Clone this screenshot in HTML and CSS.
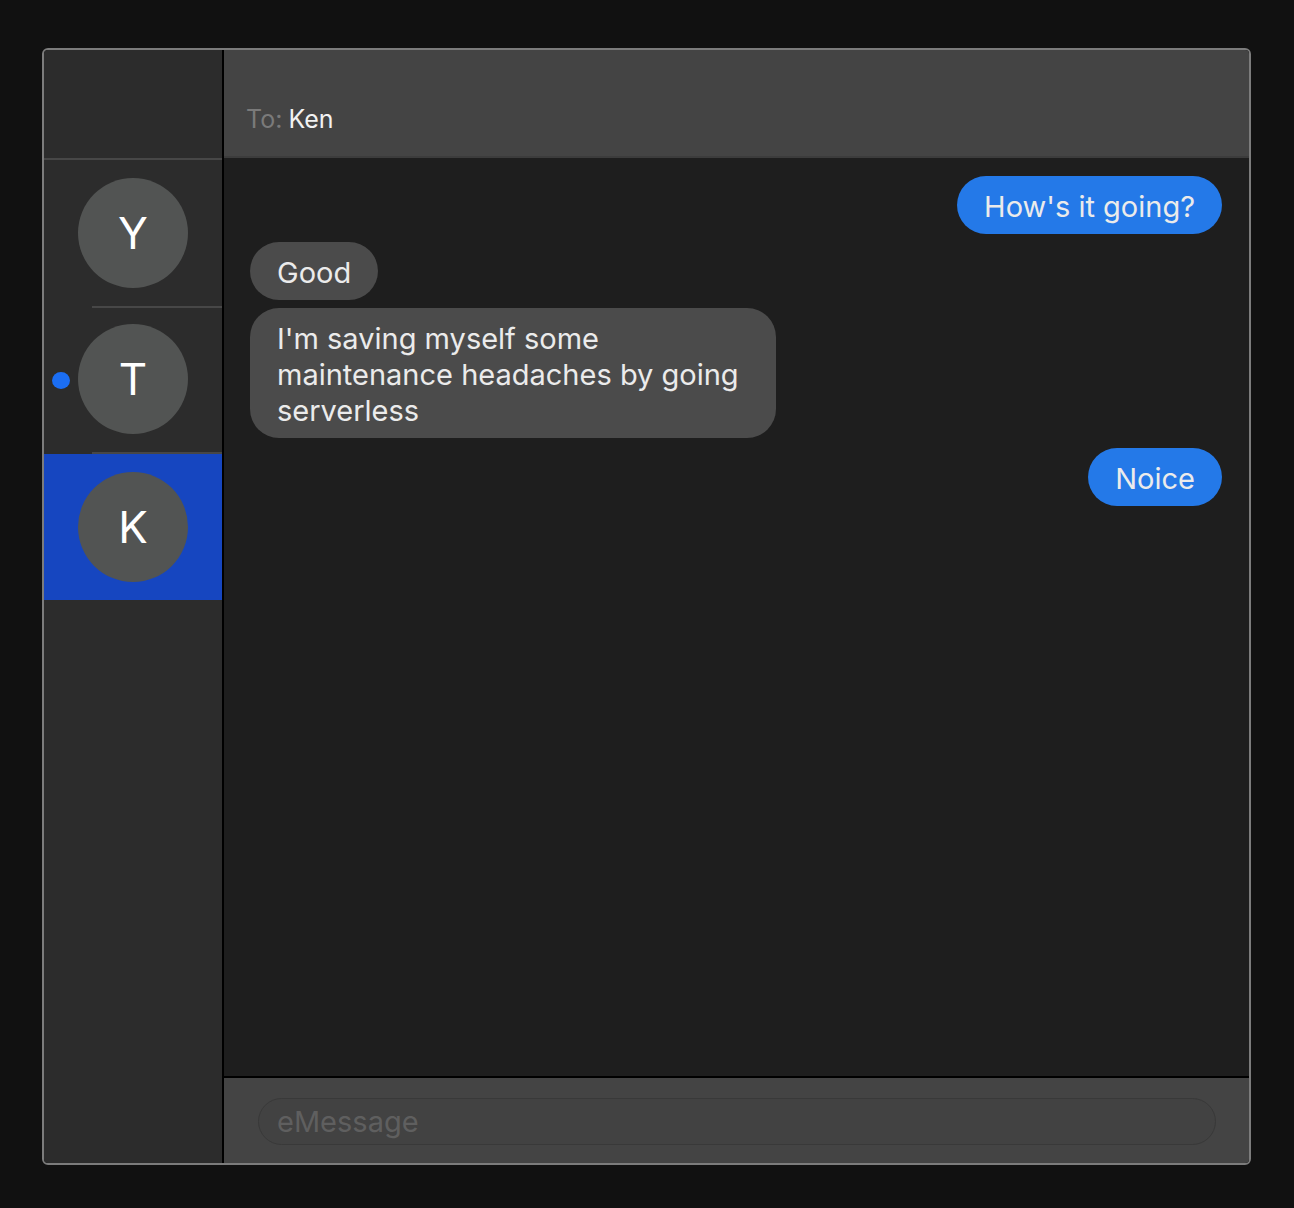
FILE: index.html
```html
<!DOCTYPE html>
<html>
<head>
<meta charset="utf-8">
<link rel="stylesheet" href="styles.css">
</head>
<body>
<div class="window">
  <aside class="sidebar">
    <div class="sidebar-header"></div>
    <div class="conv">
      <div class="avatar">Y</div>
    </div>
    <div class="conv sep">
      <span class="unread"></span>
      <div class="avatar">T</div>
    </div>
    <div class="conv sep selected">
      <div class="avatar">K</div>
    </div>
  </aside>
  <main class="main">
    <header class="main-header"><span class="to">To:</span> <span class="name">Ken</span></header>
    <section class="messages">
      <div class="bubble out">How's it going?</div>
      <div class="bubble in">Good</div>
      <div class="bubble in multi">I'm saving myself some maintenance headaches by going serverless</div>
      <div class="bubble out gap">Noice</div>
    </section>
    <footer class="composer">
      <div class="input">eMessage</div>
    </footer>
  </main>
</div>
</body>
</html>
```
FILE: styles.css
```css
* { box-sizing: border-box; }
html, body { margin: 0; padding: 0; }
body {
  background: #111111;
  font-family: Inter, "Liberation Sans", Arial, sans-serif;
  padding: 48px 43px 0 42px;
  height: 1208px;
}
.window {
  width: 1209px;
  height: 1117px;
  border: 2px solid #7c7c7c;
  border-radius: 6px;
  overflow: hidden;
  display: flex;
}
.sidebar {
  width: 180px;
  flex: none;
  background: #2c2c2c;
  border-right: 2px solid #000;
}
.sidebar-header {
  height: 110px;
  border-bottom: 2px solid #474747;
}
.conv {
  position: relative;
  height: 146px;
  display: flex;
  align-items: center;
  justify-content: center;
}
.conv.sep::before {
  content: "";
  position: absolute;
  left: 48px;
  right: 0;
  top: 0;
  height: 2px;
  background: #474747;
}
.conv.selected {
  height: 148px;
  border-top: 2px solid transparent;
  background: #1646c0;
  background-clip: padding-box;
}
.conv.selected::before { top: -2px; }
.avatar {
  width: 110px;
  height: 110px;
  border-radius: 50%;
  background: #525453;
  color: #fff;
  font-size: 44px;
  display: flex;
  align-items: center;
  justify-content: center;
}
.unread {
  position: absolute;
  left: 8px;
  top: 66px;
  width: 18px;
  height: 17px;
  border-radius: 50%;
  background: #1b6ef3;
}
.main {
  flex: 1;
  display: flex;
  flex-direction: column;
  background: #1e1e1e;
}
.main-header {
  height: 108px;
  background: #444444;
  display: flex;
  align-items: flex-end;
  padding: 0 0 22px 22px;
  font-size: 25px;
  gap: 6px;
  border-bottom: 2px solid #3c3c3c;
}
.to { color: #7a7a7a; }
.name { color: #f2f2f2; }
.messages {
  flex: 1;
  display: flex;
  flex-direction: column;
  padding: 18px 27px 0 26px;
  gap: 8px;
}
.bubble {
  font-size: 29px;
  line-height: 36px;
  color: #ebebeb;
  padding: 13px 27px 9px;
  border-radius: 29px;
  max-width: 526px;
}
.bubble.out {
  align-self: flex-end;
  background: #2479e8;
}
.bubble.in {
  align-self: flex-start;
  background: #4b4b4b;
}
.bubble.multi { width: 526px; }
.bubble.gap { margin-top: 2px; }
.composer {
  height: 87px;
  flex: none;
  background: #444444;
  border-top: 2px solid #000;
  padding: 20px 33px 0 34px;
}
.input {
  height: 47px;
  border: 1px solid #393939;
  border-radius: 24px;
  background: #424242;
  color: #5f5f5f;
  font-size: 29px;
  line-height: 45px;
  padding-left: 18px;
}
```
